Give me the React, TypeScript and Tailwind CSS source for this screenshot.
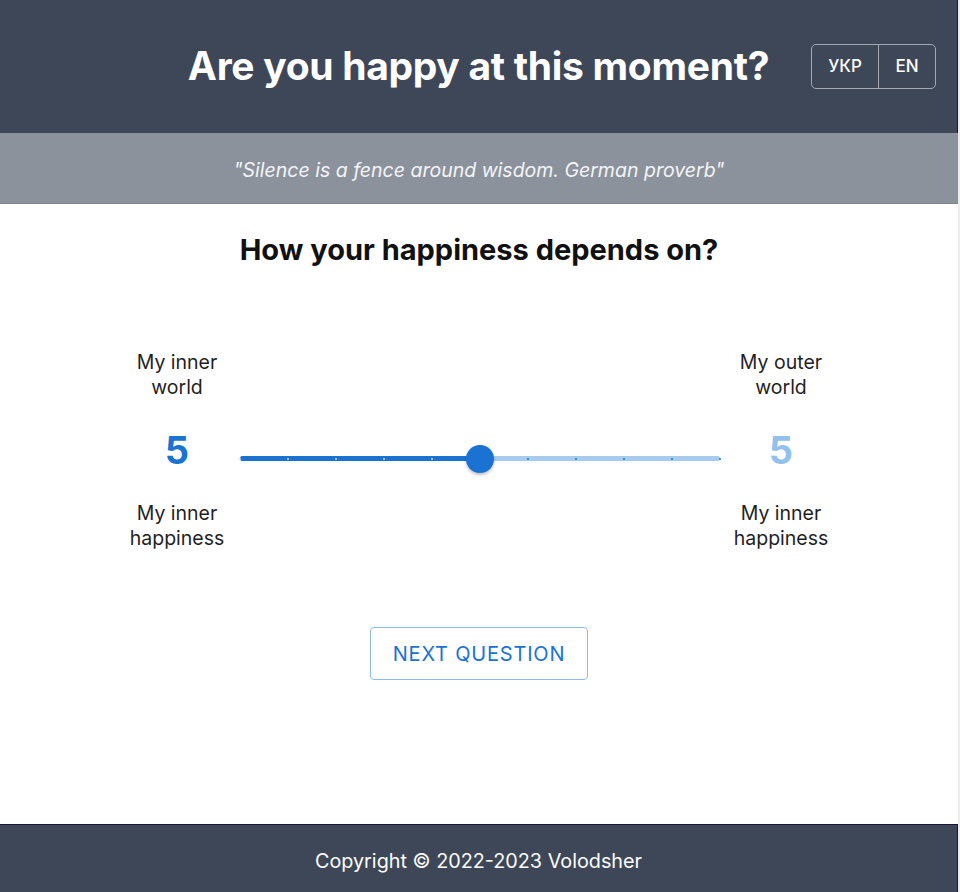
import React from 'react';

const font = { fontFamily: 'Inter, "Noto Sans", sans-serif' };

function SideColumn({ top, value, bottom, light }: { top: string[]; value: number; bottom: string[]; light?: boolean }) {
  return (
    <div className="flex w-[110px] flex-col items-center text-center">
      <div className="mt-[2px] text-[19.5px] leading-[25px] text-[#1f1f1f]">
        {top.map((t) => (
          <div key={t}>{t}</div>
        ))}
      </div>
      <div className={`mt-[29px] text-[38px] font-bold leading-[42px] ${light ? 'text-[#93c1ee]' : 'text-[#1a73d3]'}`}>{value}</div>
      <div className="mt-[30px] text-[19.5px] leading-[25px] text-[#1f1f1f]">
        {bottom.map((t) => (
          <div key={t}>{t}</div>
        ))}
      </div>
    </div>
  );
}

function Slider({ value }: { value: number }) {
  const steps = [0, 1, 2, 3, 4, 5, 6, 7, 8, 9, 10];
  const pct = (value / 10) * 100;
  return (
    <div className="relative mt-[97px] h-[28px] w-[480px]">
      {/* rail */}
      <div className="absolute left-0 right-0 top-[11px] h-[5px] rounded-full bg-[#a6caf0]" />
      {/* track */}
      <div className="absolute left-0 top-[11px] h-[5px] rounded-full bg-[#1a73d3]" style={{ width: `${pct}%` }} />
      {/* marks */}
      {steps.map((s) => (
        <div
          key={s}
          className={`absolute top-[12.5px] h-[2px] w-[2px] -translate-x-1/2 rounded-full ${s <= value ? 'bg-[#cfe2f7]' : 'bg-[#1a73d3]'}`}
          style={{ left: `${s * 10}%` }}
        />
      ))}
      {/* thumb */}
      <div
        className="absolute top-0 h-[28px] w-[28px] -translate-x-1/2 rounded-full bg-[#1a73d3] shadow-[0_2px_3px_rgba(0,0,0,0.25)]"
        style={{ left: `${pct}%` }}
      />
    </div>
  );
}

export default function App() {
  return (
    <div className="flex h-screen w-full bg-[#ededed]" style={font}>
      <div className="flex w-[958px] flex-col bg-white">
        {/* Header */}
        <header className="grid h-[133px] shrink-0 grid-cols-[1fr_auto_1fr] items-center border-r border-[#141a3a] bg-[#3e4758]">
          <div />
          <h1 className="text-[39px] font-bold tracking-[-0.3px] text-white">Are you happy at this moment?</h1>
          <div className="flex justify-end pr-[21px]">
            <div className="flex h-[45px] overflow-hidden rounded-[5px] border border-[#a3a8b1] text-[17px] font-medium text-white">
              <button className="w-[67px] border-r border-[#a3a8b1]">УКР</button>
              <button className="w-[56px]">EN</button>
            </div>
          </div>
        </header>

        {/* Quote */}
        <div className="flex h-[71px] shrink-0 items-center justify-center border-b border-[#7c828c] bg-[#8b929c] pt-[6px]">
          <p className="text-[19.5px] italic text-[#f4f5f7]">"Silence is a fence around wisdom. German proverb"</p>
        </div>

        {/* Main */}
        <main className="flex flex-1 flex-col items-center pt-[30px]">
          <h2 className="text-[29px] font-bold leading-[32px] text-[#111]">How your happiness depends on?</h2>

          <div className="mt-[82px] flex">
            <div className="mr-[8px]">
              <SideColumn top={['My inner', 'world']} value={5} bottom={['My inner', 'happiness']} />
            </div>
            <Slider value={5} />
            <div className="ml-[6px]">
              <SideColumn top={['My outer', 'world']} value={5} bottom={['My inner', 'happiness']} light />
            </div>
          </div>

          <button className="mt-[76px] h-[53px] w-[218px] rounded-[4px] border border-[#8fbbea] text-[20px] tracking-[0.8px] text-[#1a73d3]">
            NEXT QUESTION
          </button>
        </main>

        {/* Footer */}
        <footer className="flex h-[68px] shrink-0 items-center justify-center border-r border-t border-[#141a3a] bg-[#3e4758] pt-[6px]">
          <p className="text-[19.8px] text-white">Copyright © 2022-2023 Volodsher</p>
        </footer>
      </div>
    </div>
  );
}
